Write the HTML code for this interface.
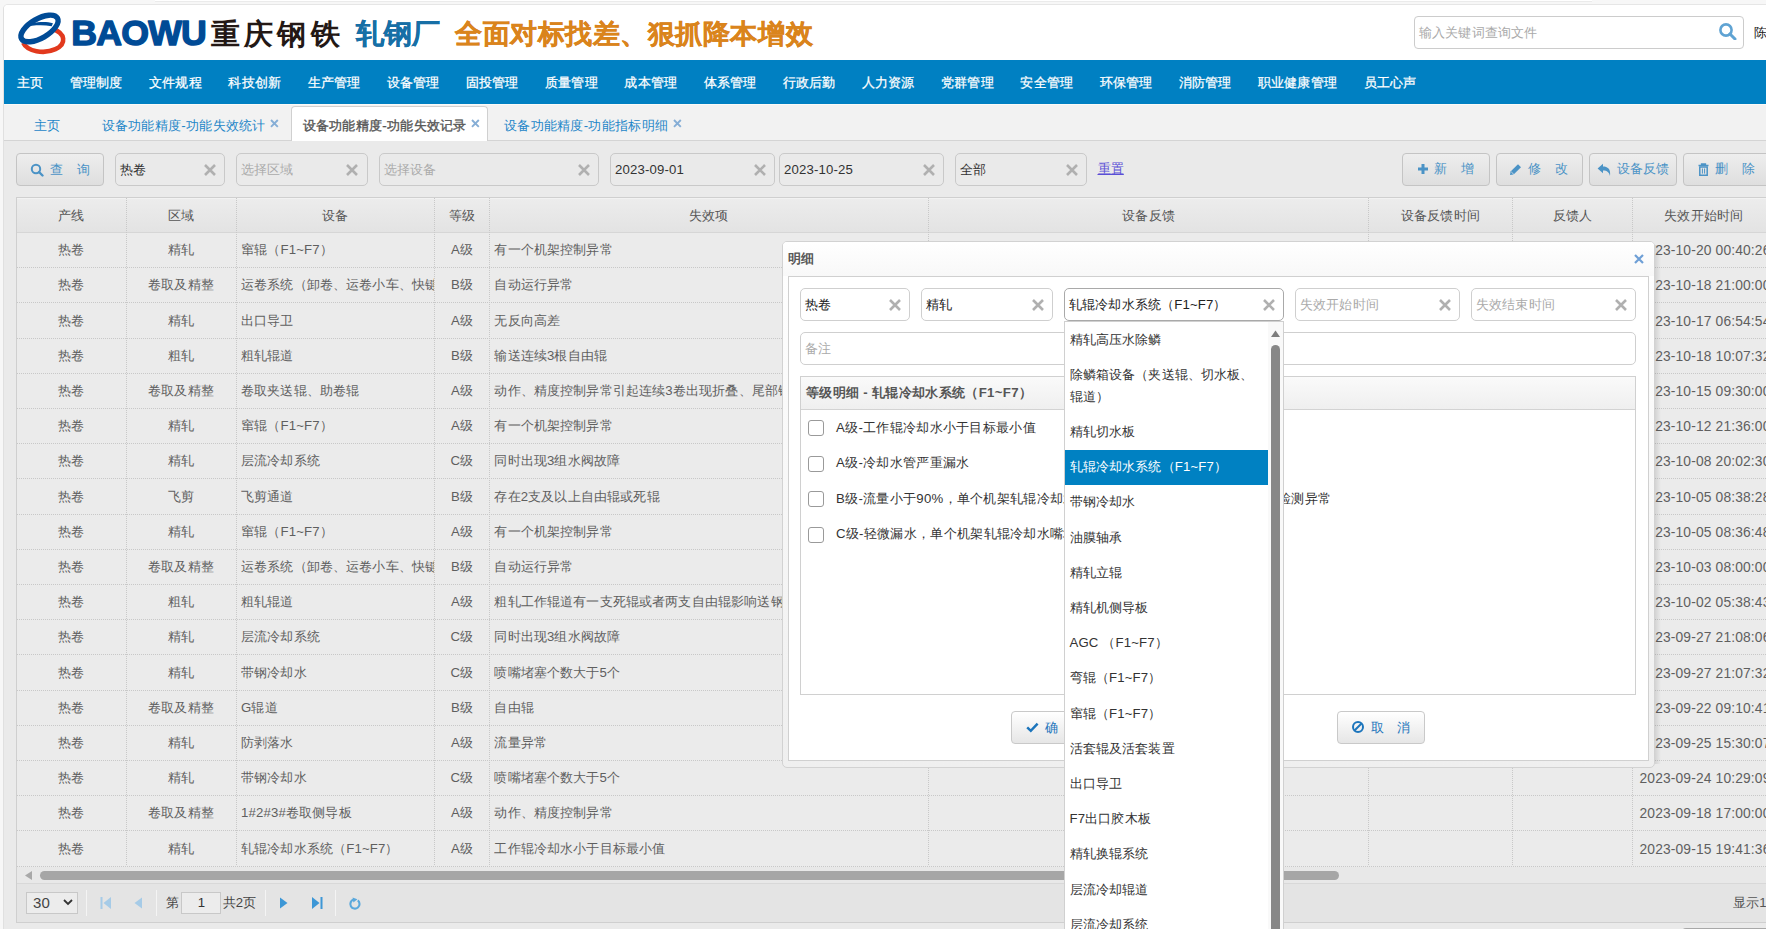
<!DOCTYPE html><html><head><meta charset="utf-8"><style>
*{margin:0;padding:0;box-sizing:border-box}
html,body{width:1766px;height:929px;overflow:hidden;background:#f7f7f7;font-family:"Liberation Sans",sans-serif;font-size:13.2px;color:#333;letter-spacing:0.15px}
.a{position:absolute}
.t{position:absolute;white-space:nowrap}
</style></head><body>
<div class="a" style="left:3px;top:4px;width:1763px;height:925px;border-left:1px solid #e0e0e0;border-top:1px solid #e6e6e6;border-top-left-radius:5px;background:#fff"></div>
<div class="a" style="left:155px;top:0;width:1437px;height:1px;background:#fff"></div>
<div class="a" style="left:155px;top:1px;width:1437px;height:1px;background:#ebebeb"></div>
<div class="a" style="left:4px;top:5px;width:1762px;height:55px;background:#fff;border-top-left-radius:4px"></div>
<svg class="a" style="left:15px;top:8px" width="55" height="50" viewBox="0 0 1022 929">
<path d="M698,391 A378,225 0 1,1 153,648" fill="none" stroke="#e2391d" stroke-width="85"/>
<ellipse cx="456" cy="380" rx="385" ry="180" transform="rotate(-30 456 380)" fill="none" stroke="#004b96" stroke-width="100"/>
<path d="M165,350 C300,258 560,240 705,285 L682,338 C520,305 330,318 165,350 Z" fill="#004b96"/>
</svg>
<svg class="a" style="left:68px;top:10px" width="145" height="42" viewBox="0 0 145 42"><text x="3.3" y="35.4" font-family="Liberation Sans" font-weight="bold" font-size="35.7" letter-spacing="-0.8" fill="#004b96" stroke="#004b96" stroke-width="1.4" stroke-linejoin="round">BAOWU</text></svg>
<div class="t" style="left:211px;top:13px;font-size:29px;line-height:42px;color:#231815;font-weight:bold;letter-spacing:4.2px">重庆钢铁</div>
<div class="t" style="left:355.5px;top:13px;font-size:28px;line-height:42px;color:#176fa6;font-weight:bold;-webkit-text-stroke:0.3px #176fa6">轧钢厂</div>
<div class="t" style="left:455px;top:12.5px;font-size:27.4px;line-height:42px;color:#da841c;font-weight:bold;letter-spacing:0.55px;-webkit-text-stroke:0.35px #da841c">全面对标找差、狠抓降本增效</div>
<div class="a" style="left:1414px;top:16px;width:330px;height:33px;border:1px solid #ccc;border-radius:4px;background:#fff"></div>
<div class="t" style="left:1419px;top:23px;line-height:20px;color:#aaa">输入关键词查询文件</div>
<svg class="a" style="left:1719px;top:23px" width="18" height="17" viewBox="0 0 18 17"><circle cx="7" cy="7" r="5.6" fill="none" stroke="#5fa3d3" stroke-width="2.6"/><path d="M11,11 L16,16" stroke="#5fa3d3" stroke-width="3" stroke-linecap="round"/></svg>
<div class="t" style="left:1754px;top:23px;line-height:20px;color:#222">陈</div>
<div class="a" style="left:4px;top:60px;width:1762px;height:44px;background:#0080c2"></div>
<div class="t" style="left:17.20px;top:60.5px;line-height:44px;color:#fff;-webkit-text-stroke:0.25px #fff">主页</div>
<div class="t" style="left:70.00px;top:60.5px;line-height:44px;color:#fff;-webkit-text-stroke:0.25px #fff">管理制度</div>
<div class="t" style="left:149.20px;top:60.5px;line-height:44px;color:#fff;-webkit-text-stroke:0.25px #fff">文件规程</div>
<div class="t" style="left:228.40px;top:60.5px;line-height:44px;color:#fff;-webkit-text-stroke:0.25px #fff">科技创新</div>
<div class="t" style="left:307.60px;top:60.5px;line-height:44px;color:#fff;-webkit-text-stroke:0.25px #fff">生产管理</div>
<div class="t" style="left:386.80px;top:60.5px;line-height:44px;color:#fff;-webkit-text-stroke:0.25px #fff">设备管理</div>
<div class="t" style="left:466.00px;top:60.5px;line-height:44px;color:#fff;-webkit-text-stroke:0.25px #fff">固投管理</div>
<div class="t" style="left:545.20px;top:60.5px;line-height:44px;color:#fff;-webkit-text-stroke:0.25px #fff">质量管理</div>
<div class="t" style="left:624.40px;top:60.5px;line-height:44px;color:#fff;-webkit-text-stroke:0.25px #fff">成本管理</div>
<div class="t" style="left:703.60px;top:60.5px;line-height:44px;color:#fff;-webkit-text-stroke:0.25px #fff">体系管理</div>
<div class="t" style="left:782.80px;top:60.5px;line-height:44px;color:#fff;-webkit-text-stroke:0.25px #fff">行政后勤</div>
<div class="t" style="left:862.00px;top:60.5px;line-height:44px;color:#fff;-webkit-text-stroke:0.25px #fff">人力资源</div>
<div class="t" style="left:941.20px;top:60.5px;line-height:44px;color:#fff;-webkit-text-stroke:0.25px #fff">党群管理</div>
<div class="t" style="left:1020.40px;top:60.5px;line-height:44px;color:#fff;-webkit-text-stroke:0.25px #fff">安全管理</div>
<div class="t" style="left:1099.60px;top:60.5px;line-height:44px;color:#fff;-webkit-text-stroke:0.25px #fff">环保管理</div>
<div class="t" style="left:1178.80px;top:60.5px;line-height:44px;color:#fff;-webkit-text-stroke:0.25px #fff">消防管理</div>
<div class="t" style="left:1258.00px;top:60.5px;line-height:44px;color:#fff;-webkit-text-stroke:0.25px #fff">职业健康管理</div>
<div class="t" style="left:1363.60px;top:60.5px;line-height:44px;color:#fff;-webkit-text-stroke:0.25px #fff">员工心声</div>
<div class="a" style="left:4px;top:104px;width:1762px;height:1px;background:#fbfaf7"></div>
<div class="a" style="left:4px;top:105px;width:1762px;height:36px;background:#f2f2f2;border-bottom:1px solid #d4d4d4"></div>
<div class="a" style="left:291px;top:106px;width:197px;height:35px;background:#fff;border:1px solid #d0d0d0;border-bottom:none;border-radius:4px 4px 0 0"></div>
<div class="t" style="left:33.5px;top:114.5px;line-height:22px;color:#1d86c8;letter-spacing:0.3px;font-weight:normal">主页</div>
<div class="t" style="left:101.5px;top:114.5px;line-height:22px;color:#1d86c8;letter-spacing:0.3px;font-weight:normal">设备功能精度-功能失效统计</div>
<svg class="a" style="left:268.90000000000003px;top:118.1px" width="10.8" height="10.8" viewBox="0 0 10.8 10.8"><path d="M2,2 L8.8,8.8 M8.8,2 L2,8.8" stroke="#86aed6" stroke-width="1.9"/></svg>
<div class="t" style="left:302.5px;top:114.5px;line-height:22px;color:#555;letter-spacing:0.3px;font-weight:normal;-webkit-text-stroke:0.35px #555">设备功能精度-功能失效记录</div>
<svg class="a" style="left:470.40000000000003px;top:118.1px" width="10.8" height="10.8" viewBox="0 0 10.8 10.8"><path d="M2,2 L8.8,8.8 M8.8,2 L2,8.8" stroke="#86aed6" stroke-width="1.9"/></svg>
<div class="t" style="left:504px;top:114.5px;line-height:22px;color:#1d86c8;letter-spacing:0.3px;font-weight:normal">设备功能精度-功能指标明细</div>
<svg class="a" style="left:671.9px;top:118.1px" width="10.8" height="10.8" viewBox="0 0 10.8 10.8"><path d="M2,2 L8.8,8.8 M8.8,2 L2,8.8" stroke="#86aed6" stroke-width="1.9"/></svg>
<div class="a" style="left:4px;top:141px;width:1762px;height:788px;background:#eaeaea"></div>
<div class="a" style="left:16px;top:153px;width:88px;height:33px;border:1px solid #c4c4c4;border-radius:4px;background:linear-gradient(#eeeeee,#dedede)"></div>
<svg class="a" style="left:30px;top:163px" width="14" height="14" viewBox="0 0 14 14"><circle cx="6" cy="6" r="4.2" fill="none" stroke="#4b93c6" stroke-width="2"/><path d="M9,9 L12.5,12.5" stroke="#4b93c6" stroke-width="2.4" stroke-linecap="round"/></svg><div class="t" style="left:50px;top:158.5px;line-height:22px;color:#4b93c6;letter-spacing:14px">查询</div>
<div class="a" style="left:115px;top:153px;width:110px;height:33px;border:1px solid #c9c9c9;border-radius:5px;background:#eaeaea"></div>
<div class="t" style="left:120px;top:158.5px;line-height:22px;color:#333">热卷</div>
<svg class="a" style="left:203px;top:162.5px" width="14" height="14" viewBox="0 0 14 14"><path d="M2,2 L12,12 M12,2 L2,12" stroke="#b0b0b0" stroke-width="2.6"/></svg>
<div class="a" style="left:236px;top:153px;width:132px;height:33px;border:1px solid #c9c9c9;border-radius:5px;background:#eaeaea"></div>
<div class="t" style="left:241px;top:158.5px;line-height:22px;color:#aaa">选择区域</div>
<svg class="a" style="left:345px;top:162.5px" width="14" height="14" viewBox="0 0 14 14"><path d="M2,2 L12,12 M12,2 L2,12" stroke="#b0b0b0" stroke-width="2.6"/></svg>
<div class="a" style="left:379px;top:153px;width:220px;height:33px;border:1px solid #c9c9c9;border-radius:5px;background:#eaeaea"></div>
<div class="t" style="left:384px;top:158.5px;line-height:22px;color:#aaa">选择设备</div>
<svg class="a" style="left:577px;top:162.5px" width="14" height="14" viewBox="0 0 14 14"><path d="M2,2 L12,12 M12,2 L2,12" stroke="#b0b0b0" stroke-width="2.6"/></svg>
<div class="a" style="left:610px;top:153px;width:165px;height:33px;border:1px solid #c9c9c9;border-radius:5px;background:#eaeaea"></div>
<div class="t" style="left:615px;top:158.5px;line-height:22px;color:#333">2023-09-01</div>
<svg class="a" style="left:753px;top:162.5px" width="14" height="14" viewBox="0 0 14 14"><path d="M2,2 L12,12 M12,2 L2,12" stroke="#b0b0b0" stroke-width="2.6"/></svg>
<div class="a" style="left:779px;top:153px;width:165px;height:33px;border:1px solid #c9c9c9;border-radius:5px;background:#eaeaea"></div>
<div class="t" style="left:784px;top:158.5px;line-height:22px;color:#333">2023-10-25</div>
<svg class="a" style="left:922px;top:162.5px" width="14" height="14" viewBox="0 0 14 14"><path d="M2,2 L12,12 M12,2 L2,12" stroke="#b0b0b0" stroke-width="2.6"/></svg>
<div class="a" style="left:955px;top:153px;width:132px;height:33px;border:1px solid #c9c9c9;border-radius:5px;background:#eaeaea"></div>
<div class="t" style="left:960px;top:158.5px;line-height:22px;color:#333">全部</div>
<svg class="a" style="left:1065px;top:162.5px" width="14" height="14" viewBox="0 0 14 14"><path d="M2,2 L12,12 M12,2 L2,12" stroke="#b0b0b0" stroke-width="2.6"/></svg>
<div class="t" style="left:1097.5px;top:158px;line-height:22px;color:#5a4fd6;text-decoration:underline">重置</div>
<div class="a" style="left:1402px;top:153px;width:88px;height:33px;border:1px solid #c4c4c4;border-radius:4px;background:linear-gradient(#eeeeee,#dedede)"></div>
<svg class="a" style="left:1417px;top:163px" width="12" height="12" viewBox="0 0 12 12"><path d="M6,1 V11 M1,6 H11" stroke="#4b93c6" stroke-width="3"/></svg><div class="t" style="left:1434px;top:158px;line-height:22px;color:#4b93c6;letter-spacing:14px">新增</div>
<div class="a" style="left:1496px;top:153px;width:87px;height:33px;border:1px solid #c4c4c4;border-radius:4px;background:linear-gradient(#eeeeee,#dedede)"></div>
<svg class="a" style="left:1509px;top:163px" width="14" height="13" viewBox="0 0 14 13"><path d="M1,12 L1.6,8.6 L9,1.2 L12,4.2 L4.6,11.6 Z" fill="#4b93c6"/><path d="M2.2,8.8 L5,11.6" stroke="#eaeaea" stroke-width="0.8"/></svg><div class="t" style="left:1528px;top:158px;line-height:22px;color:#4b93c6;letter-spacing:14px">修改</div>
<div class="a" style="left:1589px;top:153px;width:88px;height:33px;border:1px solid #c4c4c4;border-radius:4px;background:linear-gradient(#eeeeee,#dedede)"></div>
<svg class="a" style="left:1596.5px;top:162.5px" width="15" height="14" viewBox="0 0 15 14"><path d="M0.6,5.4 L6,0.8 V3.6 C10.5,3.6 14,6 13,13 C12.2,9.6 10.2,7.6 6,7.6 V10.2 Z" fill="#4b93c6"/></svg><div class="t" style="left:1617px;top:158px;line-height:22px;color:#4b93c6;letter-spacing:0px">设备反馈</div>
<div class="a" style="left:1683px;top:153px;width:92px;height:33px;border:1px solid #c4c4c4;border-radius:4px;background:linear-gradient(#eeeeee,#dedede)"></div>
<svg class="a" style="left:1698px;top:163px" width="11" height="13" viewBox="0 0 11 13"><path d="M0.5,2.6 H10.5 M3.6,2.4 V1 H7.4 V2.4" fill="none" stroke="#4b93c6" stroke-width="1.5"/><path d="M1.8,4 H9.2 V12.2 H1.8 Z" fill="none" stroke="#4b93c6" stroke-width="1.5"/><path d="M4.4,5.5 V10.6 M6.6,5.5 V10.6" stroke="#4b93c6" stroke-width="1"/></svg><div class="t" style="left:1715px;top:158px;line-height:22px;color:#4b93c6;letter-spacing:14px">删除</div>
<div class="a" style="left:16px;top:197px;width:1760px;height:726px;border:1px solid #cfcfcf;background:#ebebeb"></div>
<div class="a" style="left:155px;top:0;width:1437px;height:1px;background:#fff"></div>
<div class="a" style="left:155px;top:1px;width:1437px;height:1px;background:#ebebeb"></div>
<div class="a" style="left:17px;top:198px;width:1760px;height:34px;background:linear-gradient(#ececec,#e3e3e3);border-top:1px solid #f2f2f2"></div>
<div class="a" style="left:17px;top:232px;width:1760px;height:1px;background:#d6d6d6"></div>
<div class="t" style="left:16px;top:205px;width:110px;text-align:center;line-height:22px;color:#555">产线</div>
<div class="t" style="left:126px;top:205px;width:110px;text-align:center;line-height:22px;color:#555">区域</div>
<div class="t" style="left:236px;top:205px;width:198.60000000000002px;text-align:center;line-height:22px;color:#555">设备</div>
<div class="t" style="left:434.6px;top:205px;width:54.799999999999955px;text-align:center;line-height:22px;color:#555">等级</div>
<div class="t" style="left:489.4px;top:205px;width:439.0px;text-align:center;line-height:22px;color:#555">失效项</div>
<div class="t" style="left:928.4px;top:205px;width:440.4px;text-align:center;line-height:22px;color:#555">设备反馈</div>
<div class="t" style="left:1368.8px;top:205px;width:143.20000000000005px;text-align:center;line-height:22px;color:#555">设备反馈时间</div>
<div class="t" style="left:1512px;top:205px;width:120.5px;text-align:center;line-height:22px;color:#555">反馈人</div>
<div class="t" style="left:1632.5px;top:205px;width:142.5px;text-align:center;line-height:22px;color:#555">失效开始时间</div>
<div class="a" style="left:126px;top:198px;width:1px;height:668px;background:repeating-linear-gradient(#c8c8c8 0 1px,transparent 1px 2px)"></div>
<div class="a" style="left:236px;top:198px;width:1px;height:668px;background:repeating-linear-gradient(#c8c8c8 0 1px,transparent 1px 2px)"></div>
<div class="a" style="left:434px;top:198px;width:1px;height:668px;background:repeating-linear-gradient(#c8c8c8 0 1px,transparent 1px 2px)"></div>
<div class="a" style="left:489px;top:198px;width:1px;height:668px;background:repeating-linear-gradient(#c8c8c8 0 1px,transparent 1px 2px)"></div>
<div class="a" style="left:928px;top:198px;width:1px;height:668px;background:repeating-linear-gradient(#c8c8c8 0 1px,transparent 1px 2px)"></div>
<div class="a" style="left:1368px;top:198px;width:1px;height:668px;background:repeating-linear-gradient(#c8c8c8 0 1px,transparent 1px 2px)"></div>
<div class="a" style="left:1512px;top:198px;width:1px;height:668px;background:repeating-linear-gradient(#c8c8c8 0 1px,transparent 1px 2px)"></div>
<div class="a" style="left:1632px;top:198px;width:1px;height:668px;background:repeating-linear-gradient(#c8c8c8 0 1px,transparent 1px 2px)"></div>
<div class="a" style="left:17px;top:267.20px;width:1760px;height:1px;background:repeating-linear-gradient(90deg,#c8c8c8 0 1px,transparent 1px 2px)"></div>
<div class="t" style="left:16px;top:239.20px;width:110px;text-align:center;line-height:22px;color:#5f5f5f">热卷</div>
<div class="t" style="left:126px;top:239.20px;width:110px;text-align:center;line-height:22px;color:#5f5f5f">精轧</div>
<div class="t" style="left:241px;top:239.20px;width:192.60000000000002px;overflow:hidden;line-height:22px;color:#5f5f5f">窜辊（F1~F7）</div>
<div class="t" style="left:434.6px;top:239.20px;width:54.799999999999955px;text-align:center;line-height:22px;color:#5f5f5f">A级</div>
<div class="t" style="left:494.4px;top:239.20px;width:433.0px;overflow:hidden;line-height:22px;color:#5f5f5f">有一个机架控制异常</div>
<div class="t" style="left:1639.5px;top:240.10px;line-height:22px;font-size:13.8px;color:#5f5f5f">2023-10-20 00:40:26</div>
<div class="a" style="left:17px;top:302.40px;width:1760px;height:1px;background:repeating-linear-gradient(90deg,#c8c8c8 0 1px,transparent 1px 2px)"></div>
<div class="t" style="left:16px;top:274.40px;width:110px;text-align:center;line-height:22px;color:#5f5f5f">热卷</div>
<div class="t" style="left:126px;top:274.40px;width:110px;text-align:center;line-height:22px;color:#5f5f5f">卷取及精整</div>
<div class="t" style="left:241px;top:274.40px;width:192.60000000000002px;overflow:hidden;line-height:22px;color:#5f5f5f">运卷系统（卸卷、运卷小车、快键检测）</div>
<div class="t" style="left:434.6px;top:274.40px;width:54.799999999999955px;text-align:center;line-height:22px;color:#5f5f5f">B级</div>
<div class="t" style="left:494.4px;top:274.40px;width:433.0px;overflow:hidden;line-height:22px;color:#5f5f5f">自动运行异常</div>
<div class="t" style="left:1639.5px;top:275.30px;line-height:22px;font-size:13.8px;color:#5f5f5f">2023-10-18 21:00:00</div>
<div class="a" style="left:17px;top:337.60px;width:1760px;height:1px;background:repeating-linear-gradient(90deg,#c8c8c8 0 1px,transparent 1px 2px)"></div>
<div class="t" style="left:16px;top:309.60px;width:110px;text-align:center;line-height:22px;color:#5f5f5f">热卷</div>
<div class="t" style="left:126px;top:309.60px;width:110px;text-align:center;line-height:22px;color:#5f5f5f">精轧</div>
<div class="t" style="left:241px;top:309.60px;width:192.60000000000002px;overflow:hidden;line-height:22px;color:#5f5f5f">出口导卫</div>
<div class="t" style="left:434.6px;top:309.60px;width:54.799999999999955px;text-align:center;line-height:22px;color:#5f5f5f">A级</div>
<div class="t" style="left:494.4px;top:309.60px;width:433.0px;overflow:hidden;line-height:22px;color:#5f5f5f">无反向高差</div>
<div class="t" style="left:1639.5px;top:310.50px;line-height:22px;font-size:13.8px;color:#5f5f5f">2023-10-17 06:54:54</div>
<div class="a" style="left:17px;top:372.80px;width:1760px;height:1px;background:repeating-linear-gradient(90deg,#c8c8c8 0 1px,transparent 1px 2px)"></div>
<div class="t" style="left:16px;top:344.80px;width:110px;text-align:center;line-height:22px;color:#5f5f5f">热卷</div>
<div class="t" style="left:126px;top:344.80px;width:110px;text-align:center;line-height:22px;color:#5f5f5f">粗轧</div>
<div class="t" style="left:241px;top:344.80px;width:192.60000000000002px;overflow:hidden;line-height:22px;color:#5f5f5f">粗轧辊道</div>
<div class="t" style="left:434.6px;top:344.80px;width:54.799999999999955px;text-align:center;line-height:22px;color:#5f5f5f">B级</div>
<div class="t" style="left:494.4px;top:344.80px;width:433.0px;overflow:hidden;line-height:22px;color:#5f5f5f">输送连续3根自由辊</div>
<div class="t" style="left:1639.5px;top:345.70px;line-height:22px;font-size:13.8px;color:#5f5f5f">2023-10-18 10:07:32</div>
<div class="a" style="left:17px;top:408.00px;width:1760px;height:1px;background:repeating-linear-gradient(90deg,#c8c8c8 0 1px,transparent 1px 2px)"></div>
<div class="t" style="left:16px;top:380.00px;width:110px;text-align:center;line-height:22px;color:#5f5f5f">热卷</div>
<div class="t" style="left:126px;top:380.00px;width:110px;text-align:center;line-height:22px;color:#5f5f5f">卷取及精整</div>
<div class="t" style="left:241px;top:380.00px;width:192.60000000000002px;overflow:hidden;line-height:22px;color:#5f5f5f">卷取夹送辊、助卷辊</div>
<div class="t" style="left:434.6px;top:380.00px;width:54.799999999999955px;text-align:center;line-height:22px;color:#5f5f5f">A级</div>
<div class="t" style="left:494.4px;top:380.00px;width:433.0px;overflow:hidden;line-height:22px;color:#5f5f5f">动作、精度控制异常引起连续3卷出现折叠、尾部错层</div>
<div class="t" style="left:1639.5px;top:380.90px;line-height:22px;font-size:13.8px;color:#5f5f5f">2023-10-15 09:30:00</div>
<div class="a" style="left:17px;top:443.20px;width:1760px;height:1px;background:repeating-linear-gradient(90deg,#c8c8c8 0 1px,transparent 1px 2px)"></div>
<div class="t" style="left:16px;top:415.20px;width:110px;text-align:center;line-height:22px;color:#5f5f5f">热卷</div>
<div class="t" style="left:126px;top:415.20px;width:110px;text-align:center;line-height:22px;color:#5f5f5f">精轧</div>
<div class="t" style="left:241px;top:415.20px;width:192.60000000000002px;overflow:hidden;line-height:22px;color:#5f5f5f">窜辊（F1~F7）</div>
<div class="t" style="left:434.6px;top:415.20px;width:54.799999999999955px;text-align:center;line-height:22px;color:#5f5f5f">A级</div>
<div class="t" style="left:494.4px;top:415.20px;width:433.0px;overflow:hidden;line-height:22px;color:#5f5f5f">有一个机架控制异常</div>
<div class="t" style="left:1639.5px;top:416.10px;line-height:22px;font-size:13.8px;color:#5f5f5f">2023-10-12 21:36:00</div>
<div class="a" style="left:17px;top:478.40px;width:1760px;height:1px;background:repeating-linear-gradient(90deg,#c8c8c8 0 1px,transparent 1px 2px)"></div>
<div class="t" style="left:16px;top:450.40px;width:110px;text-align:center;line-height:22px;color:#5f5f5f">热卷</div>
<div class="t" style="left:126px;top:450.40px;width:110px;text-align:center;line-height:22px;color:#5f5f5f">精轧</div>
<div class="t" style="left:241px;top:450.40px;width:192.60000000000002px;overflow:hidden;line-height:22px;color:#5f5f5f">层流冷却系统</div>
<div class="t" style="left:434.6px;top:450.40px;width:54.799999999999955px;text-align:center;line-height:22px;color:#5f5f5f">C级</div>
<div class="t" style="left:494.4px;top:450.40px;width:433.0px;overflow:hidden;line-height:22px;color:#5f5f5f">同时出现3组水阀故障</div>
<div class="t" style="left:1639.5px;top:451.30px;line-height:22px;font-size:13.8px;color:#5f5f5f">2023-10-08 20:02:30</div>
<div class="a" style="left:17px;top:513.60px;width:1760px;height:1px;background:repeating-linear-gradient(90deg,#c8c8c8 0 1px,transparent 1px 2px)"></div>
<div class="t" style="left:16px;top:485.60px;width:110px;text-align:center;line-height:22px;color:#5f5f5f">热卷</div>
<div class="t" style="left:126px;top:485.60px;width:110px;text-align:center;line-height:22px;color:#5f5f5f">飞剪</div>
<div class="t" style="left:241px;top:485.60px;width:192.60000000000002px;overflow:hidden;line-height:22px;color:#5f5f5f">飞剪通道</div>
<div class="t" style="left:434.6px;top:485.60px;width:54.799999999999955px;text-align:center;line-height:22px;color:#5f5f5f">B级</div>
<div class="t" style="left:494.4px;top:485.60px;width:433.0px;overflow:hidden;line-height:22px;color:#5f5f5f">存在2支及以上自由辊或死辊</div>
<div class="t" style="left:1639.5px;top:486.50px;line-height:22px;font-size:13.8px;color:#5f5f5f">2023-10-05 08:38:28</div>
<div class="a" style="left:17px;top:548.80px;width:1760px;height:1px;background:repeating-linear-gradient(90deg,#c8c8c8 0 1px,transparent 1px 2px)"></div>
<div class="t" style="left:16px;top:520.80px;width:110px;text-align:center;line-height:22px;color:#5f5f5f">热卷</div>
<div class="t" style="left:126px;top:520.80px;width:110px;text-align:center;line-height:22px;color:#5f5f5f">精轧</div>
<div class="t" style="left:241px;top:520.80px;width:192.60000000000002px;overflow:hidden;line-height:22px;color:#5f5f5f">窜辊（F1~F7）</div>
<div class="t" style="left:434.6px;top:520.80px;width:54.799999999999955px;text-align:center;line-height:22px;color:#5f5f5f">A级</div>
<div class="t" style="left:494.4px;top:520.80px;width:433.0px;overflow:hidden;line-height:22px;color:#5f5f5f">有一个机架控制异常</div>
<div class="t" style="left:1639.5px;top:521.70px;line-height:22px;font-size:13.8px;color:#5f5f5f">2023-10-05 08:36:48</div>
<div class="a" style="left:17px;top:584.00px;width:1760px;height:1px;background:repeating-linear-gradient(90deg,#c8c8c8 0 1px,transparent 1px 2px)"></div>
<div class="t" style="left:16px;top:556.00px;width:110px;text-align:center;line-height:22px;color:#5f5f5f">热卷</div>
<div class="t" style="left:126px;top:556.00px;width:110px;text-align:center;line-height:22px;color:#5f5f5f">卷取及精整</div>
<div class="t" style="left:241px;top:556.00px;width:192.60000000000002px;overflow:hidden;line-height:22px;color:#5f5f5f">运卷系统（卸卷、运卷小车、快键检测）</div>
<div class="t" style="left:434.6px;top:556.00px;width:54.799999999999955px;text-align:center;line-height:22px;color:#5f5f5f">B级</div>
<div class="t" style="left:494.4px;top:556.00px;width:433.0px;overflow:hidden;line-height:22px;color:#5f5f5f">自动运行异常</div>
<div class="t" style="left:1639.5px;top:556.90px;line-height:22px;font-size:13.8px;color:#5f5f5f">2023-10-03 08:00:00</div>
<div class="a" style="left:17px;top:619.20px;width:1760px;height:1px;background:repeating-linear-gradient(90deg,#c8c8c8 0 1px,transparent 1px 2px)"></div>
<div class="t" style="left:16px;top:591.20px;width:110px;text-align:center;line-height:22px;color:#5f5f5f">热卷</div>
<div class="t" style="left:126px;top:591.20px;width:110px;text-align:center;line-height:22px;color:#5f5f5f">粗轧</div>
<div class="t" style="left:241px;top:591.20px;width:192.60000000000002px;overflow:hidden;line-height:22px;color:#5f5f5f">粗轧辊道</div>
<div class="t" style="left:434.6px;top:591.20px;width:54.799999999999955px;text-align:center;line-height:22px;color:#5f5f5f">A级</div>
<div class="t" style="left:494.4px;top:591.20px;width:433.0px;overflow:hidden;line-height:22px;color:#5f5f5f">粗轧工作辊道有一支死辊或者两支自由辊影响送钢</div>
<div class="t" style="left:1639.5px;top:592.10px;line-height:22px;font-size:13.8px;color:#5f5f5f">2023-10-02 05:38:43</div>
<div class="a" style="left:17px;top:654.40px;width:1760px;height:1px;background:repeating-linear-gradient(90deg,#c8c8c8 0 1px,transparent 1px 2px)"></div>
<div class="t" style="left:16px;top:626.40px;width:110px;text-align:center;line-height:22px;color:#5f5f5f">热卷</div>
<div class="t" style="left:126px;top:626.40px;width:110px;text-align:center;line-height:22px;color:#5f5f5f">精轧</div>
<div class="t" style="left:241px;top:626.40px;width:192.60000000000002px;overflow:hidden;line-height:22px;color:#5f5f5f">层流冷却系统</div>
<div class="t" style="left:434.6px;top:626.40px;width:54.799999999999955px;text-align:center;line-height:22px;color:#5f5f5f">C级</div>
<div class="t" style="left:494.4px;top:626.40px;width:433.0px;overflow:hidden;line-height:22px;color:#5f5f5f">同时出现3组水阀故障</div>
<div class="t" style="left:1639.5px;top:627.30px;line-height:22px;font-size:13.8px;color:#5f5f5f">2023-09-27 21:08:06</div>
<div class="a" style="left:17px;top:689.60px;width:1760px;height:1px;background:repeating-linear-gradient(90deg,#c8c8c8 0 1px,transparent 1px 2px)"></div>
<div class="t" style="left:16px;top:661.60px;width:110px;text-align:center;line-height:22px;color:#5f5f5f">热卷</div>
<div class="t" style="left:126px;top:661.60px;width:110px;text-align:center;line-height:22px;color:#5f5f5f">精轧</div>
<div class="t" style="left:241px;top:661.60px;width:192.60000000000002px;overflow:hidden;line-height:22px;color:#5f5f5f">带钢冷却水</div>
<div class="t" style="left:434.6px;top:661.60px;width:54.799999999999955px;text-align:center;line-height:22px;color:#5f5f5f">C级</div>
<div class="t" style="left:494.4px;top:661.60px;width:433.0px;overflow:hidden;line-height:22px;color:#5f5f5f">喷嘴堵塞个数大于5个</div>
<div class="t" style="left:1639.5px;top:662.50px;line-height:22px;font-size:13.8px;color:#5f5f5f">2023-09-27 21:07:32</div>
<div class="a" style="left:17px;top:724.80px;width:1760px;height:1px;background:repeating-linear-gradient(90deg,#c8c8c8 0 1px,transparent 1px 2px)"></div>
<div class="t" style="left:16px;top:696.80px;width:110px;text-align:center;line-height:22px;color:#5f5f5f">热卷</div>
<div class="t" style="left:126px;top:696.80px;width:110px;text-align:center;line-height:22px;color:#5f5f5f">卷取及精整</div>
<div class="t" style="left:241px;top:696.80px;width:192.60000000000002px;overflow:hidden;line-height:22px;color:#5f5f5f">G辊道</div>
<div class="t" style="left:434.6px;top:696.80px;width:54.799999999999955px;text-align:center;line-height:22px;color:#5f5f5f">B级</div>
<div class="t" style="left:494.4px;top:696.80px;width:433.0px;overflow:hidden;line-height:22px;color:#5f5f5f">自由辊</div>
<div class="t" style="left:1639.5px;top:697.70px;line-height:22px;font-size:13.8px;color:#5f5f5f">2023-09-22 09:10:41</div>
<div class="a" style="left:17px;top:760.00px;width:1760px;height:1px;background:repeating-linear-gradient(90deg,#c8c8c8 0 1px,transparent 1px 2px)"></div>
<div class="t" style="left:16px;top:732.00px;width:110px;text-align:center;line-height:22px;color:#5f5f5f">热卷</div>
<div class="t" style="left:126px;top:732.00px;width:110px;text-align:center;line-height:22px;color:#5f5f5f">精轧</div>
<div class="t" style="left:241px;top:732.00px;width:192.60000000000002px;overflow:hidden;line-height:22px;color:#5f5f5f">防剥落水</div>
<div class="t" style="left:434.6px;top:732.00px;width:54.799999999999955px;text-align:center;line-height:22px;color:#5f5f5f">A级</div>
<div class="t" style="left:494.4px;top:732.00px;width:433.0px;overflow:hidden;line-height:22px;color:#5f5f5f">流量异常</div>
<div class="t" style="left:1639.5px;top:732.90px;line-height:22px;font-size:13.8px;color:#5f5f5f">2023-09-25 15:30:07</div>
<div class="a" style="left:17px;top:795.20px;width:1760px;height:1px;background:repeating-linear-gradient(90deg,#c8c8c8 0 1px,transparent 1px 2px)"></div>
<div class="t" style="left:16px;top:767.20px;width:110px;text-align:center;line-height:22px;color:#5f5f5f">热卷</div>
<div class="t" style="left:126px;top:767.20px;width:110px;text-align:center;line-height:22px;color:#5f5f5f">精轧</div>
<div class="t" style="left:241px;top:767.20px;width:192.60000000000002px;overflow:hidden;line-height:22px;color:#5f5f5f">带钢冷却水</div>
<div class="t" style="left:434.6px;top:767.20px;width:54.799999999999955px;text-align:center;line-height:22px;color:#5f5f5f">C级</div>
<div class="t" style="left:494.4px;top:767.20px;width:433.0px;overflow:hidden;line-height:22px;color:#5f5f5f">喷嘴堵塞个数大于5个</div>
<div class="t" style="left:1639.5px;top:768.10px;line-height:22px;font-size:13.8px;color:#5f5f5f">2023-09-24 10:29:09</div>
<div class="a" style="left:17px;top:830.40px;width:1760px;height:1px;background:repeating-linear-gradient(90deg,#c8c8c8 0 1px,transparent 1px 2px)"></div>
<div class="t" style="left:16px;top:802.40px;width:110px;text-align:center;line-height:22px;color:#5f5f5f">热卷</div>
<div class="t" style="left:126px;top:802.40px;width:110px;text-align:center;line-height:22px;color:#5f5f5f">卷取及精整</div>
<div class="t" style="left:241px;top:802.40px;width:192.60000000000002px;overflow:hidden;line-height:22px;color:#5f5f5f">1#2#3#卷取侧导板</div>
<div class="t" style="left:434.6px;top:802.40px;width:54.799999999999955px;text-align:center;line-height:22px;color:#5f5f5f">A级</div>
<div class="t" style="left:494.4px;top:802.40px;width:433.0px;overflow:hidden;line-height:22px;color:#5f5f5f">动作、精度控制异常</div>
<div class="t" style="left:1639.5px;top:803.30px;line-height:22px;font-size:13.8px;color:#5f5f5f">2023-09-18 17:00:00</div>
<div class="a" style="left:17px;top:865.60px;width:1760px;height:1px;background:repeating-linear-gradient(90deg,#c8c8c8 0 1px,transparent 1px 2px)"></div>
<div class="t" style="left:16px;top:837.60px;width:110px;text-align:center;line-height:22px;color:#5f5f5f">热卷</div>
<div class="t" style="left:126px;top:837.60px;width:110px;text-align:center;line-height:22px;color:#5f5f5f">精轧</div>
<div class="t" style="left:241px;top:837.60px;width:192.60000000000002px;overflow:hidden;line-height:22px;color:#5f5f5f">轧辊冷却水系统（F1~F7）</div>
<div class="t" style="left:434.6px;top:837.60px;width:54.799999999999955px;text-align:center;line-height:22px;color:#5f5f5f">A级</div>
<div class="t" style="left:494.4px;top:837.60px;width:433.0px;overflow:hidden;line-height:22px;color:#5f5f5f">工作辊冷却水小于目标最小值</div>
<div class="t" style="left:1639.5px;top:838.50px;line-height:22px;font-size:13.8px;color:#5f5f5f">2023-09-15 19:41:36</div>
<div class="a" style="left:17px;top:867px;width:1760px;height:17px;background:#e8e8e8;border-bottom:1px solid #d8d8d8"></div>
<svg class="a" style="left:24px;top:870px" width="10" height="11" viewBox="0 0 10 11"><path d="M1,5.5 L8,1 V10 Z" fill="#a8a8a8"/></svg>
<div class="a" style="left:40px;top:871px;width:1299px;height:9px;border-radius:5px;background:#a6a6a6"></div>
<div class="a" style="left:17px;top:884px;width:1760px;height:39px;background:#e4e4e4;border-bottom:1px solid #cfcfcf"></div>
<div class="a" style="left:26px;top:892px;width:52px;height:22px;border:1px solid #c8c8c8;background:#ececec"></div>
<div class="t" style="left:33px;top:892px;line-height:22px;font-size:15px;color:#444">30</div>
<svg class="a" style="left:63px;top:899px" width="10" height="7" viewBox="0 0 10 7"><path d="M1,1 L5,5 L9,1" fill="none" stroke="#333" stroke-width="1.8"/></svg>
<div class="a" style="left:86px;top:890px;width:1px;height:26px;background:#c8c8c8;border-right:1px solid #f4f4f4"></div>
<div class="a" style="left:156px;top:890px;width:1px;height:26px;background:#c8c8c8;border-right:1px solid #f4f4f4"></div>
<div class="a" style="left:265px;top:890px;width:1px;height:26px;background:#c8c8c8;border-right:1px solid #f4f4f4"></div>
<div class="a" style="left:335px;top:890px;width:1px;height:26px;background:#c8c8c8;border-right:1px solid #f4f4f4"></div>
<svg class="a" style="left:100px;top:896px" width="12" height="14" viewBox="0 0 12 14"><path d="M1.5,1 V13" stroke="#a6cbe7" stroke-width="2"/><path d="M11,1 L3.5,7 L11,13 Z" fill="#a6cbe7"/></svg>
<svg class="a" style="left:133px;top:896px" width="10" height="14" viewBox="0 0 10 14"><path d="M9,1.5 L1.5,7 L9,12.5 Z" fill="#a6cbe7"/></svg>
<div class="t" style="left:166px;top:892px;line-height:22px;color:#444">第</div>
<div class="a" style="left:181px;top:892px;width:40px;height:22px;border:1px solid #c8c8c8;background:#ececec"></div>
<div class="t" style="left:182px;top:892px;width:39px;text-align:center;line-height:21px;color:#333">1</div>
<div class="t" style="left:222.5px;top:892px;line-height:22px;color:#444">共2页</div>
<svg class="a" style="left:279px;top:896px" width="10" height="14" viewBox="0 0 10 14"><path d="M1,1.5 L8.5,7 L1,12.5 Z" fill="#3d97d6"/></svg>
<svg class="a" style="left:311px;top:896px" width="12" height="14" viewBox="0 0 12 14"><path d="M10.5,1 V13" stroke="#3d97d6" stroke-width="2"/><path d="M1,1 L8.5,7 L1,13 Z" fill="#3d97d6"/></svg>
<svg class="a" style="left:347.5px;top:896.5px" width="14" height="14" viewBox="0 0 14 14"><path d="M9.8,3.4 A4.6,4.6 0 1,1 5.6,2.6" fill="none" stroke="#5aa8dc" stroke-width="2.1"/><path d="M4.6,0.6 L9.4,2.2 L5.4,5.6 Z" fill="#5aa8dc"/></svg>
<div class="t" style="left:1733px;top:892px;line-height:22px;color:#555">显示1到30,共37记录</div>
<div class="a" style="left:1682px;top:927.5px;width:100px;height:10px;border-radius:4px 0 0 0;background:#a8a8a8"></div>
<div class="a" style="left:1655px;top:245px;width:6px;height:519px;background:linear-gradient(90deg,rgba(0,0,0,0.10),rgba(0,0,0,0))"></div>
<div class="a" style="left:782px;top:241px;width:873px;height:527px;border:1px solid #d2d2d2;border-radius:5px;background:linear-gradient(#ffffff,#efefef);"></div>
<div class="a" style="left:783px;top:242px;width:871px;height:34px;border-radius:4px 4px 0 0;background:linear-gradient(#ffffff,#f8f8f8)"></div>
<div class="t" style="left:788px;top:248px;line-height:22px;font-weight:bold;color:#575757">明细</div>
<svg class="a" style="left:1632.5px;top:252.5px" width="12" height="12" viewBox="0 0 12 12"><path d="M2,2 L10,10 M10,2 L2,10" stroke="#6e9fd6" stroke-width="2.2"/></svg>
<div class="a" style="left:788px;top:276px;width:861px;height:485px;border:1px solid #d0d0d0;background:#fff"></div>
<div class="a" style="left:800px;top:288px;width:110px;height:33px;border:1px solid #cfcfcf;border-radius:5px;background:#fff"></div>
<div class="t" style="left:805px;top:293.5px;line-height:22px;color:#222">热卷</div>
<svg class="a" style="left:888px;top:297.5px" width="14" height="14" viewBox="0 0 14 14"><path d="M2,2 L12,12 M12,2 L2,12" stroke="#b0b0b0" stroke-width="2.6"/></svg>
<div class="a" style="left:921px;top:288px;width:132px;height:33px;border:1px solid #cfcfcf;border-radius:5px;background:#fff"></div>
<div class="t" style="left:926px;top:293.5px;line-height:22px;color:#222">精轧</div>
<svg class="a" style="left:1031px;top:297.5px" width="14" height="14" viewBox="0 0 14 14"><path d="M2,2 L12,12 M12,2 L2,12" stroke="#b0b0b0" stroke-width="2.6"/></svg>
<div class="a" style="left:1064px;top:288px;width:220px;height:33px;border:1px solid #a9a9a9;border-radius:5px;background:#fff"></div>
<div class="t" style="left:1069px;top:293.5px;line-height:22px;color:#222">轧辊冷却水系统（F1~F7）</div>
<svg class="a" style="left:1262px;top:297.5px" width="14" height="14" viewBox="0 0 14 14"><path d="M2,2 L12,12 M12,2 L2,12" stroke="#b0b0b0" stroke-width="2.6"/></svg>
<div class="a" style="left:1295px;top:288px;width:165px;height:33px;border:1px solid #cfcfcf;border-radius:5px;background:#fff"></div>
<div class="t" style="left:1300px;top:293.5px;line-height:22px;color:#aaa">失效开始时间</div>
<svg class="a" style="left:1438px;top:297.5px" width="14" height="14" viewBox="0 0 14 14"><path d="M2,2 L12,12 M12,2 L2,12" stroke="#b0b0b0" stroke-width="2.6"/></svg>
<div class="a" style="left:1471px;top:288px;width:165px;height:33px;border:1px solid #cfcfcf;border-radius:5px;background:#fff"></div>
<div class="t" style="left:1476px;top:293.5px;line-height:22px;color:#aaa">失效结束时间</div>
<svg class="a" style="left:1614px;top:297.5px" width="14" height="14" viewBox="0 0 14 14"><path d="M2,2 L12,12 M12,2 L2,12" stroke="#b0b0b0" stroke-width="2.6"/></svg>
<div class="a" style="left:800px;top:332px;width:836px;height:33px;border:1px solid #cfcfcf;border-radius:5px;background:#fff"></div>
<div class="t" style="left:805px;top:337.5px;line-height:22px;color:#aaa">备注</div>
<div class="a" style="left:800px;top:376px;width:836px;height:319px;border:1px solid #d0d0d0;background:#fff"></div>
<div class="a" style="left:801px;top:377px;width:834px;height:33px;background:linear-gradient(#fafafa,#efefef);border-bottom:1px solid #d3d3d3"></div>
<div class="t" style="left:806px;top:382px;line-height:22px;font-weight:bold;color:#555;letter-spacing:0.33px">等级明细 - 轧辊冷却水系统（F1~F7）</div>
<div class="a" style="left:808px;top:420.0px;width:16px;height:16px;border:1px solid #9a9a9a;border-bottom-width:1.5px;border-radius:3px;background:#fff"></div>
<div class="t" style="left:836px;top:416.8px;line-height:22px;color:#333;letter-spacing:0.3px">A级-工作辊冷却水小于目标最小值</div>
<div class="a" style="left:808px;top:455.5px;width:16px;height:16px;border:1px solid #9a9a9a;border-bottom-width:1.5px;border-radius:3px;background:#fff"></div>
<div class="t" style="left:836px;top:452.3px;line-height:22px;color:#333;letter-spacing:0.3px">A级-冷却水管严重漏水</div>
<div class="a" style="left:808px;top:491.0px;width:16px;height:16px;border:1px solid #9a9a9a;border-bottom-width:1.5px;border-radius:3px;background:#fff"></div>
<div class="t" style="left:836px;top:487.8px;line-height:22px;color:#333;letter-spacing:0.3px">B级-流量小于90%，单个机架轧辊冷却水嘴堵塞个数大于10个，或机架流量检测异常</div>
<div class="a" style="left:808px;top:526.5px;width:16px;height:16px;border:1px solid #9a9a9a;border-bottom-width:1.5px;border-radius:3px;background:#fff"></div>
<div class="t" style="left:836px;top:523.3px;line-height:22px;color:#333;letter-spacing:0.3px">C级-轻微漏水，单个机架轧辊冷却水嘴堵塞</div>
<div class="a" style="left:1011px;top:711px;width:88px;height:33px;border:1px solid #c9c9c9;border-radius:4px;background:linear-gradient(#ffffff,#e6e6e6)"></div>
<svg class="a" style="left:1025.5px;top:722px" width="13" height="11" viewBox="0 0 13 11"><path d="M1.2,5.4 L4.8,8.8 L11.6,1.6" fill="none" stroke="#1c75bc" stroke-width="2.5"/></svg>
<div class="t" style="left:1045px;top:716.5px;line-height:22px;color:#1c75bc;letter-spacing:13px">确定</div>
<div class="a" style="left:1337px;top:711px;width:88px;height:33px;border:1px solid #c9c9c9;border-radius:4px;background:linear-gradient(#ffffff,#e6e6e6)"></div>
<svg class="a" style="left:1351px;top:720px" width="14" height="14" viewBox="0 0 14 14"><circle cx="7" cy="7" r="5" fill="none" stroke="#1c75bc" stroke-width="2"/><path d="M3.5,10.5 L10.5,3.5" stroke="#1c75bc" stroke-width="2"/></svg>
<div class="t" style="left:1371px;top:716.5px;line-height:22px;color:#1c75bc;letter-spacing:13px">取消</div>
<div class="a" style="left:1064px;top:321px;width:220px;height:620px;border:1px solid #d0d0d0;background:#fff"></div>
<div class="t" style="left:1069.5px;top:328.60px;line-height:22px;color:#333">精轧高压水除鳞</div>
<div class="t" style="left:1069.5px;top:363.80px;line-height:22px;color:#333;white-space:normal;width:190px">除鳞箱设备（夹送辊、切水板、<br>辊道）</div>
<div class="t" style="left:1069.5px;top:421.00px;line-height:22px;color:#333">精轧切水板</div>
<div class="a" style="left:1065px;top:449.60px;width:203px;height:35.2px;background:#0081c2"></div>
<div class="t" style="left:1069.5px;top:456.20px;line-height:22px;color:#fff">轧辊冷却水系统（F1~F7）</div>
<div class="t" style="left:1069.5px;top:491.40px;line-height:22px;color:#333">带钢冷却水</div>
<div class="t" style="left:1069.5px;top:526.60px;line-height:22px;color:#333">油膜轴承</div>
<div class="t" style="left:1069.5px;top:561.80px;line-height:22px;color:#333">精轧立辊</div>
<div class="t" style="left:1069.5px;top:597.00px;line-height:22px;color:#333">精轧机侧导板</div>
<div class="t" style="left:1069.5px;top:632.20px;line-height:22px;color:#333">AGC （F1~F7）</div>
<div class="t" style="left:1069.5px;top:667.40px;line-height:22px;color:#333">弯辊（F1~F7）</div>
<div class="t" style="left:1069.5px;top:702.60px;line-height:22px;color:#333">窜辊（F1~F7）</div>
<div class="t" style="left:1069.5px;top:737.80px;line-height:22px;color:#333">活套辊及活套装置</div>
<div class="t" style="left:1069.5px;top:773.00px;line-height:22px;color:#333">出口导卫</div>
<div class="t" style="left:1069.5px;top:808.20px;line-height:22px;color:#333">F7出口胶木板</div>
<div class="t" style="left:1069.5px;top:843.40px;line-height:22px;color:#333">精轧换辊系统</div>
<div class="t" style="left:1069.5px;top:878.60px;line-height:22px;color:#333">层流冷却辊道</div>
<div class="t" style="left:1069.5px;top:913.80px;line-height:22px;color:#333">层流冷却系统</div>
<div class="a" style="left:1268px;top:322px;width:15px;height:607px;background:#f9f9f9"></div>
<svg class="a" style="left:1270px;top:329px" width="11" height="9" viewBox="0 0 11 9"><path d="M1,8 L5.5,1.5 L10,8 Z" fill="#7d7d7d"/></svg>
<div class="a" style="left:1271px;top:345px;width:9px;height:600px;border-radius:4.5px;background:#878787"></div>
</body></html>
